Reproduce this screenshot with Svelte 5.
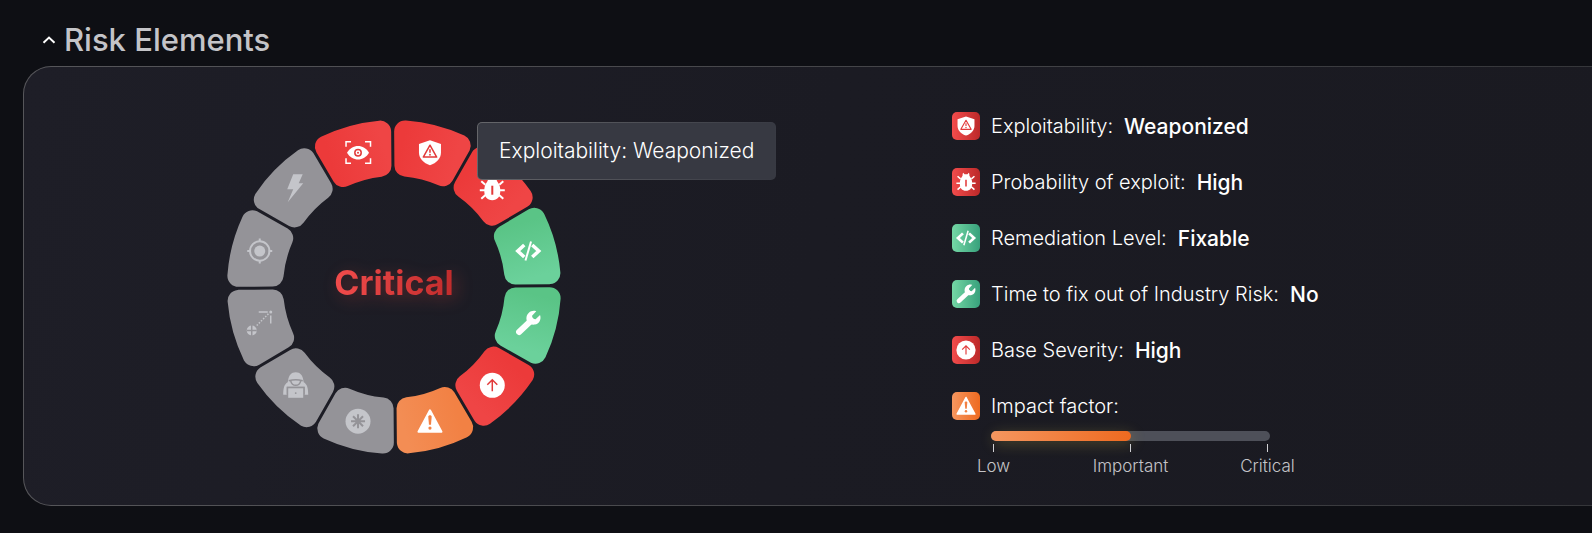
<script lang="ts">
  type Tone = "red" | "green" | "orange" | "grey";
  type IconName =
    | "shield" | "bug" | "code" | "wrench" | "up" | "warning"
    | "asterisk" | "hacker" | "vector" | "target" | "bolt" | "eye";

  let {
    title = "Risk Elements",
    rating = "Critical",
    impact = 50
  }: {
    title?: string,
    rating?: string,
    impact?: number
  } = $props();

  let open = $state(true);

  // clockwise from twelve o'clock
  const segments: { icon: IconName, tone: Tone }[] = [
    { icon: "shield", tone: "red" },
    { icon: "bug", tone: "red" },
    { icon: "code", tone: "green" },
    { icon: "wrench", tone: "green" },
    { icon: "up", tone: "red" },
    { icon: "warning", tone: "orange" },
    { icon: "asterisk", tone: "grey" },
    { icon: "hacker", tone: "grey" },
    { icon: "vector", tone: "grey" },
    { icon: "target", tone: "grey" },
    { icon: "bolt", tone: "grey" },
    { icon: "eye", tone: "red" }
  ];

  const elements: { icon: IconName, tone: Tone, label: string, value?: string }[] = [
    { icon: "shield", tone: "red", label: "Exploitability:", value: "Weaponized" },
    { icon: "bug", tone: "red", label: "Probability of exploit:", value: "High" },
    { icon: "code", tone: "green", label: "Remediation Level:", value: "Fixable" },
    { icon: "wrench", tone: "green", label: "Time to fix out of Industry Risk:", value: "No" },
    { icon: "up", tone: "red", label: "Base Severity:", value: "High" },
    { icon: "warning", tone: "orange", label: "Impact factor:" }
  ];

  const OUTER = 167;
  const INNER = 111;
  const CORNER = 11;
  const GAP = 3;
  const TILT = -0.5;

  // The slice is drawn inset by the corner radius, a round-joined stroke grows it back.
  function slicePath() {
    const ro = OUTER - CORNER;
    const ri = INNER + CORNER;
    const inset = GAP / 2 + CORNER;
    const half = Math.PI / 12;
    const ao = half - Math.asin(inset / ro);
    const ai = half - Math.asin(inset / ri);
    const at = (r: number, a: number) => `${(r * Math.sin(a)).toFixed(2)} ${(-r * Math.cos(a)).toFixed(2)}`;
    return `M${at(ro, -ao)} A${ro} ${ro} 0 0 1 ${at(ro, ao)} L${at(ri, ai)} A${ri} ${ri} 0 0 0 ${at(ri, -ai)} Z`;
  }

  const slice = slicePath();
  const angle = (i: number) => i * 30 + 15;
  const iconX = (i: number) => 139 * Math.sin((angle(i) * Math.PI) / 180);
  const iconY = (i: number) => -139 * Math.cos((angle(i) * Math.PI) / 180);
</script>

{#snippet glyph(name: IconName)}
  {#if name === "shield"}
    <path class="solid" d="M13 0.500 L24 4.300 V13 C24 18.500 19.500 23.500 13 25.500 C6.500 23.500 2 18.500 2 13 V4.300 Z" />
    <path class="cut-line" stroke-linejoin="round" d="M13 5.500 L19.700 17.300 H6.300 Z M13 9.500 V13" />
    <circle class="cut" cx="13" cy="15" r="0.900" />
  {:else if name === "bug"}
    <path class="solid" d="M9.500 1 L11 3 H15 L16.500 1 L17.500 2.500 C17 4 17.500 5 18.500 6.500 C20.500 9 21 12 21 15 C21 21 18 24.500 13 24.500 S5 21 5 15 C5 12 5.500 9 7.500 6.500 C8.500 5 9 4 8.500 2.500 Z" />
    <path class="line" d="M6 9 L2 5.500 M6 14.500 H0.500 M6.500 19 L2 23 M20 9 L24 5.500 M20 14.500 H25.500 M19.500 19 L24 23" />
    <path class="cut" d="M12 10 H14 V19 H12 Z" />
  {:else if name === "code"}
    <path class="line bold" d="M9 7 L2.500 13 L9 19 M17 7 L23.500 13 L17 19" />
    <path class="line" d="M15.800 3.500 L10.200 22.500" />
  {:else if name === "wrench"}
    <path class="handle" d="M3.800 22 L16 10.500" />
    <path class="solid" d="M21 1.200 L16.800 5.800 L17.300 8.700 L20.300 9.300 L24.800 5 C26.300 9.500 24 14 19.500 14.600 C14 15.300 10.600 11.500 11.200 7.500 C11.800 2.600 16.500 -0.500 21 1.200 Z" />
  {:else if name === "up"}
    <circle class="solid" cx="13" cy="13" r="12.500" />
    <path class="cut-line" d="M13 19 V7.500 M8 12.500 L13 7.500 L18 12.500" />
  {:else if name === "warning"}
    <path class="solid rounded" d="M13 2 L24.500 23.500 H1.500 Z" />
    <path class="cut" d="M11.300 8.500 C11.300 6.500 14.700 6.500 14.700 8.500 L14 16.500 H12 Z" />
    <circle class="cut" cx="13" cy="19.800" r="1.600" />
  {:else if name === "asterisk"}
    <circle class="solid" cx="13" cy="13" r="12.500" />
    <path class="cut-line wide" d="M13 6 V20 M6 13 H20 M8 8 L18 18 M18 8 L8 18" />
  {:else if name === "hacker"}
    <path class="solid" d="M13 0 C8.500 0 6 3.500 5.500 7.500 L5 10 C1.500 12 0.500 16 0.500 22.500 H4 V14.500 H22 V22.500 H25.500 C25.500 16 24.500 12 21 10 L20.500 7.500 C20 3.500 17.500 0 13 0 Z" />
    <path class="cut-line" d="M6 8.500 Q13 6.500 20 8.500 M8 8.500 Q9 13 13 13 Q17 13 18 8.500 M4.800 22 V15.300 H21.200 V22" />
    <path class="solid" d="M5.500 16 H20.500 V25.500 H5.500 Z" />
    <circle class="cut" cx="13" cy="20.800" r="0.900" />
  {:else if name === "vector"}
    <circle class="solid" cx="5" cy="20.500" r="5" />
    <path class="cut-line" d="M5 15 V26 M0 20.500 H10" />
    <path class="line dots" d="M10 15.500 L22.500 3" />
    <path class="line thin" d="M12 2 H21 M24 5.500 V13.500" />
    <circle class="solid" cx="24" cy="2" r="1.500" />
  {:else if name === "target"}
    <circle class="solid" cx="13" cy="13" r="5.500" />
    <circle class="line" cx="13" cy="13" r="9.700" />
    <path class="line" d="M13 0.500 V4 M13 22 V25.500 M0.500 13 H4 M22 13 H25.500" />
  {:else if name === "bolt"}
    <path class="solid" d="M10.500 -1.500 H20 L16 7.500 H20.500 L5 26.500 L10.500 13.500 H4.500 Z" />
  {:else if name === "eye"}
    <path class="line thin" d="M6 2 H1 V7 M20 2 H25.500 V7 M6 23.500 H1 V18.500 M20 23.500 H25.500 V18.500" />
    <path class="solid" d="M2 13 C7 4 19 4 24 13 C19 22 7 22 2 13 Z" />
    <circle class="cut-line" cx="13" cy="13" r="3.200" />
    <circle class="cut" cx="13" cy="13" r="1" />
  {/if}
{/snippet}

<main>
  <h2>
    <button type="button" aria-expanded={open} onclick={() => (open = !open)}>
      <svg class="chevron" class:closed={!open} viewBox="0 0 14 8" aria-hidden="true">
        <path d="M1.500 6.800 L7 1.600 L12.500 6.800" />
      </svg>
      {title}
    </button>
  </h2>

  {#if open}
    <section class="panel">
      <div class="chart">
        <div class="ring">
          <svg viewBox="-170 -170 340 340" role="img" aria-label="Risk elements by severity">
            <defs>
              <linearGradient id="tone-red">
                <stop offset="0" stop-color="#ec3a3a" />
                <stop offset="1" stop-color="#ef4545" />
              </linearGradient>
              <linearGradient id="tone-green">
                <stop offset="0" stop-color="#5ac486" />
                <stop offset="1" stop-color="#6bd19b" />
              </linearGradient>
              <linearGradient id="tone-orange">
                <stop offset="0" stop-color="#f28144" />
                <stop offset="1" stop-color="#f38d54" />
              </linearGradient>
              <linearGradient id="tone-grey">
                <stop offset="0" stop-color="#949398" />
                <stop offset="1" stop-color="#949398" />
              </linearGradient>
            </defs>
            {#each segments as segment, i}
              <path
                d={slice}
                transform="rotate({angle(i) + TILT})"
                fill="url(#tone-{segment.tone})"
                stroke="url(#tone-{segment.tone})"
                stroke-width={CORNER * 2}
                stroke-linejoin="round"
              />
              <svg class="icon {segment.tone}" x={iconX(i) - 13} y={iconY(i) - 13} width="26" height="26" viewBox="0 0 26 26">
                {@render glyph(segment.icon)}
              </svg>
            {/each}
          </svg>
          <strong class="rating">{rating}</strong>
          <div class="tooltip" role="tooltip">Exploitability: Weaponized</div>
        </div>
      </div>

      <ul class="elements">
        {#each elements as element}
          <li>
            <span class="badge {element.tone}">
              <svg class="icon {element.tone}" viewBox="0 0 26 26" aria-hidden="true">
                {@render glyph(element.icon)}
              </svg>
            </span>
            <span class="label">{element.label}</span>
            {#if element.value}
              <span class="value">{element.value}</span>
            {/if}
          </li>
        {/each}
        <li class="impact">
          <div class="track" role="meter" aria-label="Impact factor" aria-valuemin="0" aria-valuemax="100" aria-valuenow={impact}>
            <div class="fill" style:width="{impact}%"></div>
          </div>
          <div class="scale">
            <span>Low</span>
            <span>Important</span>
            <span>Critical</span>
          </div>
        </li>
      </ul>
    </section>
  {/if}
</main>

<style>
  :global(body) {
    margin: 0;
    background: #0e0f14;
  }

  main {
    box-sizing: border-box;
    min-height: 100vh;
    padding: 20px 0 27px 23px;
    font-family: Inter, "Liberation Sans", sans-serif;
    color: #fff;
    overflow: hidden;
  }

  h2 {
    margin: 0;
    padding-left: 19px;
    font-size: 31px;
    line-height: 40px;
    font-weight: 450;
  }

  button {
    display: flex;
    align-items: center;
    gap: 8px;
    padding: 0;
    border: 0;
    background: none;
    color: #c4c4c8;
    font: inherit;
    cursor: pointer;
  }

  .chevron {
    width: 14px;
    height: 8px;
    fill: none;
    stroke: #fff;
    stroke-width: 2;
  }

  .chevron.closed {
    transform: rotate(180deg);
  }

  .panel {
    display: grid;
    grid-template-columns: 928px 1fr;
    margin-top: 6px;
    padding: 45px 0 29px;
    border: 1px solid transparent;
    border-right: 0;
    border-radius: 28px 0 0 28px;
    background:
      linear-gradient(100deg, #1e1e27, #1b1b23 50%, #1a1a21) padding-box,
      linear-gradient(90deg, #56565a, #35363a) border-box;
  }

  .chart {
    padding: 5px 0 0 200px;
  }

  .ring {
    position: relative;
    display: grid;
    place-items: center;
    width: 340px;
  }

  .ring > svg,
  .rating {
    grid-area: 1 / 1;
  }

  .ring > svg {
    width: 340px;
    height: 340px;
  }

  .rating {
    padding-bottom: 8px;
    font-size: 34px;
    line-height: 44px;
    font-weight: 700;
    color: transparent;
    background: linear-gradient(90deg, #f24c4c, #c12c2c);
    background-clip: text;
    filter: drop-shadow(4px 4px 8px rgba(240, 70, 60, 0.3));
  }

  /* hangs over the hovered slice */
  .tooltip {
    position: absolute;
    top: 5px;
    left: 253px;
    padding: 13px 21px;
    border: 1px solid transparent;
    border-radius: 5px;
    background:
      linear-gradient(#373942, #373942) padding-box,
      linear-gradient(100deg, #66676b, #373942) border-box;
    font-size: 21px;
    line-height: 30px;
    font-weight: 350;
    white-space: nowrap;
  }

  .icon {
    color: #fff;
    overflow: visible;
  }

  .icon.grey { color: #c4c5ca; --cut: #949398; }
  .icon.red { --cut: #e23a3a; }
  .icon.green { --cut: #5ac486; }
  .icon.orange { --cut: #f28144; }

  .solid {
    fill: currentColor;
  }

  .rounded {
    stroke: currentColor;
    stroke-width: 2;
    stroke-linejoin: round;
  }

  .cut {
    fill: var(--cut);
  }

  .line,
  .cut-line,
  .handle {
    fill: none;
    stroke: currentColor;
    stroke-width: 2;
  }

  .cut-line {
    stroke: var(--cut);
    stroke-width: 1.5;
  }

  .line.bold { stroke-width: 3.5; }
  .line.thin { stroke-width: 1.5; }
  .cut-line.wide { stroke-width: 2; }
  .line.dots { stroke-width: 1.5; stroke-dasharray: 1.5 1.5; }

  .handle {
    stroke-width: 6;
    stroke-linecap: round;
  }

  .elements {
    display: flex;
    flex-direction: column;
    gap: 28px;
    margin: 0;
    padding: 0;
    list-style: none;
  }

  .elements li {
    display: flex;
    align-items: center;
    height: 28px;
  }

  .badge {
    display: grid;
    place-items: center;
    width: 28px;
    height: 28px;
    margin-right: 11px;
    border-radius: 5px;
  }

  .badge .icon {
    width: 20px;
    height: 20px;
  }

  .badge.red { background: linear-gradient(90deg, #f24c4c, #bc2929); }
  .badge.green { background: linear-gradient(90deg, #74d7a5, #38a17c); }
  .badge.orange { background: linear-gradient(90deg, #f5965f, #ee6a20); }

  .label {
    font-size: 20px;
    font-weight: 300;
  }

  .value {
    margin-left: 11px;
    font-size: 21px;
    font-weight: 500;
  }

  .elements .impact {
    display: block;
    width: 279px;
    height: auto;
    margin: -17px 0 0 39px;
  }

  .track {
    height: 10px;
    border-radius: 5px;
    background: #4e5059;
  }

  .fill {
    height: 10px;
    border-radius: 5px;
    background: linear-gradient(90deg, #f5965f, #ee6a20);
    box-shadow: 2px 3px 14px rgba(200, 180, 70, 0.3);
  }

  .scale {
    display: flex;
    justify-content: space-between;
    margin: 3px 2px 0;
    font-size: 17px;
    line-height: 20px;
    font-weight: 300;
    color: #c4c4c8;
  }

  .scale span {
    display: flex;
    flex-direction: column;
    align-items: center;
    gap: 4px;
    width: 1px;
    white-space: nowrap;
  }

  .scale span::before {
    content: "";
    width: 1px;
    height: 8px;
    background: #d0d0d4;
  }
</style>
